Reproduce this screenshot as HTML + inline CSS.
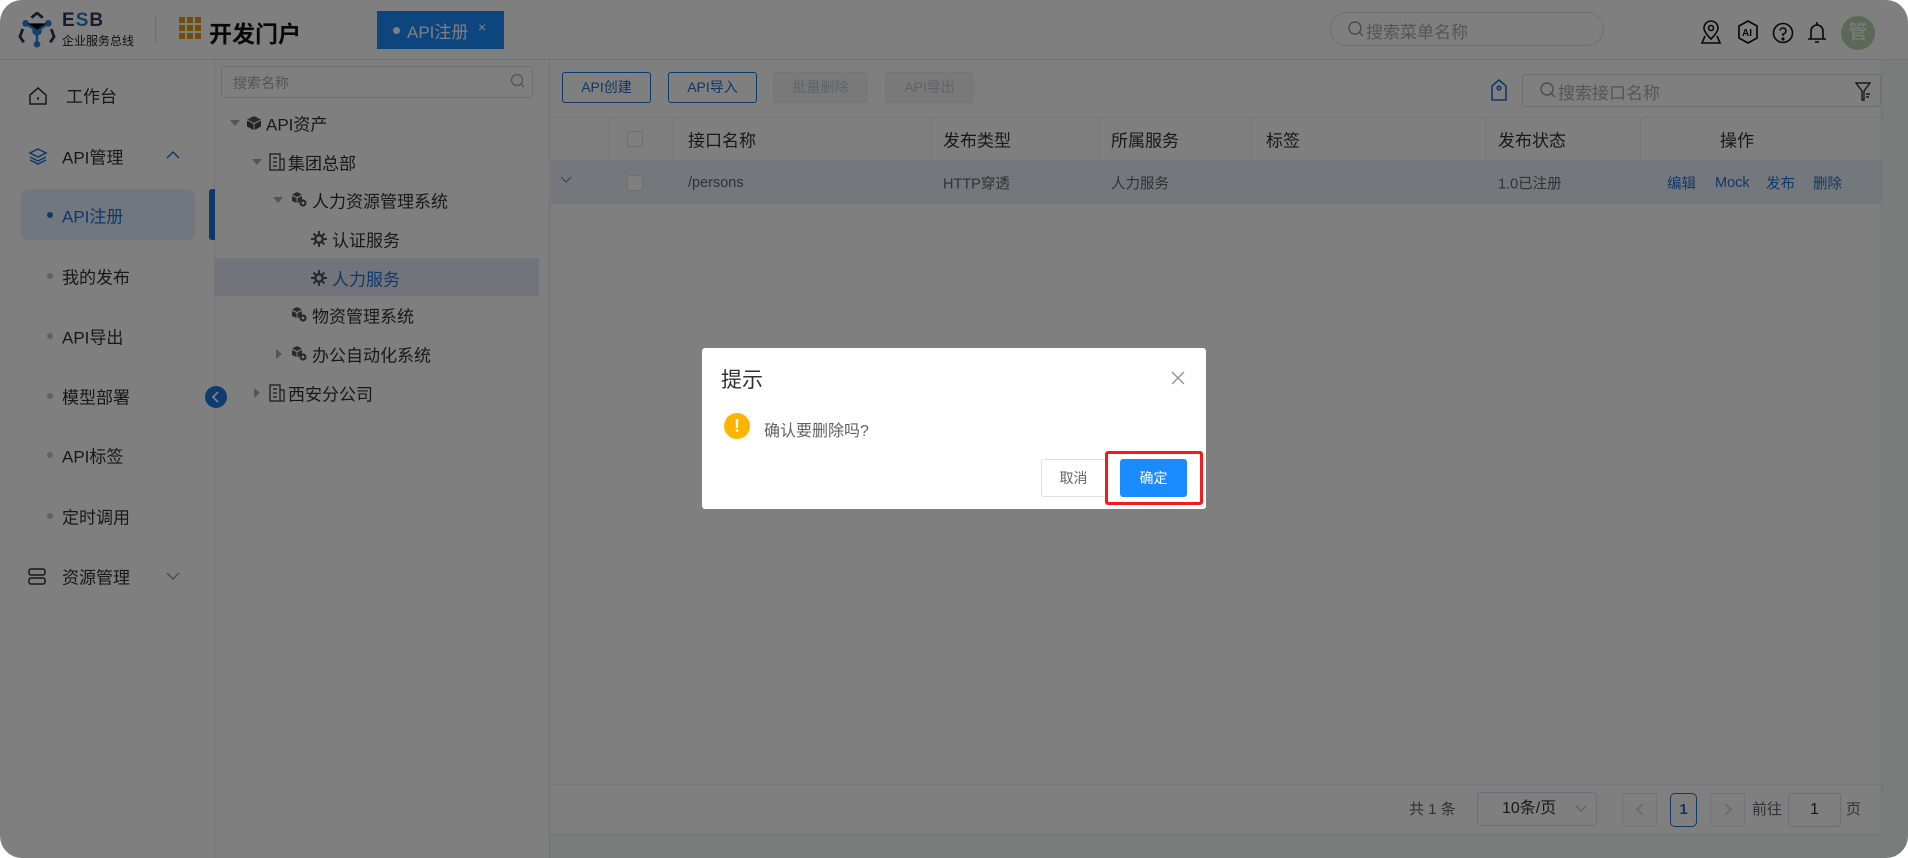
<!DOCTYPE html>
<html><head><meta charset="utf-8"><style>
*{box-sizing:border-box;margin:0;padding:0}
body{width:1908px;height:858px;background:#fff;font-family:"Liberation Sans","Noto Sans CJK SC",sans-serif;position:relative;overflow:hidden;color:#303133}
#app{position:absolute;left:0;top:0;width:1908px;height:858px;border-radius:22px;overflow:hidden;background:#f5f6f7}
.a{position:absolute;white-space:nowrap}
.hdr{left:0;top:0;width:1908px;height:60px;background:#fff;border-bottom:1px solid #e4e4e4}
.side{left:0;top:60px;width:215px;height:798px;background:#fff;border-right:1px solid #e8e8e8}
.tree{left:215px;top:60px;width:335px;height:798px;background:#fff;border-right:1px solid #e4e4e4}
.main{left:550px;top:60px;width:1332px;height:775px;background:#fff;border-bottom:1px solid #e4e4e4;border-right:1px solid #e4e4e4}
.si{font-size:17px;color:#303133;transform:translateY(-50%)}
.dot{width:6px;height:6px;border-radius:50%;background:#c0c4cc}
.tr{font-size:17px;color:#303133;transform:translateY(-50%)}
.btn{top:72px;height:31px;border:1px solid #1e6fd0;border-radius:3px;color:#1e6fd0;font-size:14px;text-align:center;line-height:29px}
.btn.d{border-color:#eee;background:#f3f3f3;color:#c0c4cc}
.th{font-size:17px;color:#303133;top:139px;transform:translateY(-50%)}
.td{font-size:14.5px;color:#606266;top:183px;transform:translateY(-50%)}
.lk{color:#1e6fd0;font-size:14.5px;top:183px;transform:translateY(-50%)}
.vl{width:1px;background:#ebeef5}
.cb{width:16px;height:16px;border:1px solid #dcdfe6;border-radius:2px;background:#fff}
.ovl{position:absolute;left:0;top:0;width:1908px;height:858px;background:rgba(0,0,0,0.5)}
</style></head><body>
<div id="app">
<div class="a hdr"></div>
<svg class="a" style="left:18px;top:12px" width="38" height="36" viewBox="0 0 40 38"><path d="M14 6 L20 1 L26 6" stroke="#2a3a5a" stroke-width="3" fill="none"/><path d="M5 18 L2 26 L6 32" stroke="#2a3a5a" stroke-width="3" fill="none"/><path d="M35 18 L38 26 L34 32" stroke="#2a3a5a" stroke-width="3" fill="none"/><circle cx="20" cy="20" r="5" fill="#2f7ed8"/><circle cx="8" cy="12" r="3.5" fill="#2f7ed8"/><circle cx="32" cy="12" r="3.5" fill="#2f7ed8"/><circle cx="20" cy="34" r="3.5" fill="#2f7ed8"/><path d="M8 12 L20 20 L32 12 M20 20 L20 34" stroke="#2f7ed8" stroke-width="2.5"/></svg>
<div class="a" style="left:62px;top:10px;font-size:19px;font-weight:bold;color:#2a3a5a;letter-spacing:1px">E<span style="color:#2f7ed8">S</span>B</div>
<div class="a" style="left:62px;top:32px;font-size:12px;color:#222">企业服务总线</div>
<div class="a" style="left:155px;top:16px;width:1px;height:28px;background:#ddd"></div>
<svg class="a" style="left:179px;top:17px" width="22" height="22"><g fill="#e0a000"><rect x="0" y="0" width="6" height="6"/><rect x="8" y="0" width="6" height="6"/><rect x="16" y="0" width="6" height="6"/><rect x="0" y="8" width="6" height="6"/><rect x="8" y="8" width="6" height="6"/><rect x="16" y="8" width="6" height="6"/><rect x="0" y="16" width="6" height="6"/><rect x="8" y="16" width="6" height="6"/><rect x="16" y="16" width="6" height="6"/></g></svg>
<div class="a" style="left:209px;top:15px;font-size:23px;font-weight:bold;color:#111">开发门户</div>
<div class="a" style="left:377px;top:11px;width:127px;height:38px;background:#1b8cff"></div>
<div class="a" style="left:393px;top:27px;width:7px;height:7px;border-radius:50%;background:#fff"></div>
<div class="a" style="left:407px;top:18px;font-size:17px;color:#fff">API注册</div>
<div class="a" style="left:478px;top:19px;font-size:14px;color:#fff">×</div>
<div class="a" style="left:1330px;top:12px;width:274px;height:34px;border:1px solid #dcdfe6;border-radius:17px"></div>
<svg class="a" style="left:1348px;top:21px" width="16" height="17"><circle cx="7" cy="7" r="6" stroke="#999" stroke-width="1.4" fill="none"/><path d="M11 11 L15 15" stroke="#999" stroke-width="1.4"/></svg>
<div class="a" style="left:1366px;top:18px;font-size:17px;color:#aaa">搜索菜单名称</div>
<svg class="a" style="left:1700px;top:20px" width="22" height="26" viewBox="0 0 22 26" fill="none" stroke="#111" stroke-width="1.6"><path d="M11 19 C5 13 4 10 4 8 A7 7 0 0 1 18 8 C18 10 17 13 11 19Z"/><circle cx="11" cy="8" r="2.5"/><path d="M5 16 L2 23 L20 23 L17 16"/></svg>
<svg class="a" style="left:1737px;top:20px" width="22" height="24" viewBox="0 0 22 24" fill="none" stroke="#111" stroke-width="1.7"><path d="M11 1 L20 6 L20 18 L11 23 L2 18 L2 6 Z"/><text x="5" y="16" font-size="10" font-family="Liberation Sans" font-weight="bold" fill="#111" stroke="none">AI</text></svg>
<svg class="a" style="left:1772px;top:22px" width="22" height="22" fill="none" stroke="#111" stroke-width="1.6"><circle cx="11" cy="11" r="9.5"/><path d="M8 8.5 A3 3 0 1 1 11 12 L11 14"/><circle cx="11" cy="17" r="0.8" fill="#111"/></svg>
<svg class="a" style="left:1807px;top:20px" width="20" height="26" fill="none" stroke="#111" stroke-width="1.6"><path d="M4 19 L4 11 A6 6 0 0 1 16 11 L16 19 Z M1 19 L19 19 M10 2 L10 5"/><path d="M8 22 L12 22"/></svg>
<div class="a" style="left:1841px;top:16px;width:34px;height:34px;border-radius:50%;background:#b9d2b2;color:#fff;font-size:19px;text-align:center;line-height:34px">管</div>

<div class="a side"></div>
<svg class="a" style="left:28px;top:86px" width="20" height="20" fill="none" stroke="#333" stroke-width="1.5"><path d="M2 9 L10 2 L18 9 L18 18 L2 18 Z"/><path d="M10 11 L10 14"/></svg>
<div class="a si" style="left:66px;top:95px">工作台</div>
<svg class="a" style="left:28px;top:147px" width="20" height="18" fill="none" stroke="#1e6fd0" stroke-width="1.5"><path d="M10 2 L18 6 L10 10 L2 6 Z M2 10 L10 14 L18 10 M2 13 L10 17 L18 13"/></svg>
<div class="a si" style="left:62px;top:156px">API管理</div>
<svg class="a" style="left:166px;top:150px" width="14" height="9" fill="none" stroke="#1e6fd0" stroke-width="1.4"><path d="M1 8 L7 2 L13 8"/></svg>
<div class="a" style="left:21px;top:189px;width:174px;height:51px;border-radius:8px;background:#e3effd"></div>
<div class="a dot" style="left:47px;top:212px;background:#1e6fd0"></div>
<div class="a si" style="left:62px;top:215px;color:#1e6fd0">API注册</div>
<div class="a" style="left:209px;top:189px;width:6px;height:51px;background:#1e6fd0;border-radius:3px 0 0 3px"></div>
<div class="a dot" style="left:47px;top:273px"></div><div class="a si" style="left:62px;top:276px">我的发布</div>
<div class="a dot" style="left:47px;top:333px"></div><div class="a si" style="left:62px;top:336px">API导出</div>
<div class="a dot" style="left:47px;top:393px"></div><div class="a si" style="left:62px;top:396px">模型部署</div>
<div class="a dot" style="left:47px;top:452px"></div><div class="a si" style="left:62px;top:455px">API标签</div>
<div class="a dot" style="left:47px;top:513px"></div><div class="a si" style="left:62px;top:516px">定时调用</div>
<svg class="a" style="left:28px;top:568px" width="18" height="17" fill="none" stroke="#333" stroke-width="1.5"><rect x="1" y="1" width="16" height="6" rx="2"/><rect x="1" y="10" width="16" height="6" rx="2"/></svg>
<div class="a si" style="left:62px;top:576px">资源管理</div>
<svg class="a" style="left:166px;top:572px" width="14" height="9" fill="none" stroke="#999" stroke-width="1.4"><path d="M1 1 L7 7 L13 1"/></svg>

<div class="a tree"></div>
<div class="a" style="left:221px;top:66px;width:312px;height:32px;border:1px solid #dcdfe6;border-radius:3px"></div>
<div class="a" style="left:233px;top:73px;font-size:14px;color:#aaa">搜索名称</div>
<svg class="a" style="left:510px;top:73px" width="16" height="16" fill="none" stroke="#aaa" stroke-width="1.3"><circle cx="7" cy="7" r="5.5"/><path d="M11 11 L14 14"/></svg>
<div class="a" style="left:215px;top:258px;width:324px;height:38px;background:#e3ebf7"></div>
<div class="a" style="left:230px;top:120px;border:5px solid transparent;border-top:6px solid #aaa"></div>
<svg class="a" style="left:246px;top:115px" width="16" height="16"><path d="M8 1 L15 4.5 L8 8 L1 4.5Z" fill="#555"/><path d="M1 5.5 L7.5 9 L7.5 15 L1 11.5Z M15 5.5 L8.5 9 L8.5 15 L15 11.5Z" fill="#444"/></svg>
<div class="a tr" style="left:266px;top:123px">API资产</div>
<div class="a" style="left:252px;top:159px;border:5px solid transparent;border-top:6px solid #aaa"></div>
<svg class="a" style="left:269px;top:153px" width="16" height="18" fill="none" stroke="#555" stroke-width="1.5"><rect x="1" y="1" width="10" height="16"/><path d="M11 6 L15 6 L15 17 L11 17 M4 5 L8 5 M4 9 L8 9 M4 13 L8 13"/></svg>
<div class="a tr" style="left:288px;top:162px">集团总部</div>
<div class="a" style="left:273px;top:197px;border:5px solid transparent;border-top:6px solid #aaa"></div>
<svg class="a" style="left:290px;top:191px" width="18" height="17"><path d="M7 1 L12 3.5 L7 6 L2 3.5Z M2 5 L6.5 7 L6.5 12 L2 10Z M12 5 L7.5 7 L7.5 12 L12 10Z" fill="#555"/><circle cx="13" cy="12" r="3.6" fill="#555"/><circle cx="13" cy="12" r="1.4" fill="#fff"/></svg>
<div class="a tr" style="left:312px;top:200px">人力资源管理系统</div>
<svg class="a" style="left:311px;top:231px" width="16" height="16"><path d="M8 0 V16 M0 8 H16 M2.5 2.5 L13.5 13.5 M13.5 2.5 L2.5 13.5" stroke="#555" stroke-width="2"/><circle cx="8" cy="8" r="5" fill="#555"/><circle cx="8" cy="8" r="2.5" fill="#fff"/></svg>
<div class="a tr" style="left:332px;top:239px">认证服务</div>
<svg class="a" style="left:311px;top:270px" width="16" height="16"><path d="M8 0 V16 M0 8 H16 M2.5 2.5 L13.5 13.5 M13.5 2.5 L2.5 13.5" stroke="#555" stroke-width="2"/><circle cx="8" cy="8" r="5" fill="#555"/><circle cx="8" cy="8" r="2.5" fill="#e3ebf7"/></svg>
<div class="a tr" style="left:332px;top:278px;color:#1e6fd0">人力服务</div>
<svg class="a" style="left:290px;top:306px" width="18" height="17"><path d="M7 1 L12 3.5 L7 6 L2 3.5Z M2 5 L6.5 7 L6.5 12 L2 10Z M12 5 L7.5 7 L7.5 12 L12 10Z" fill="#555"/><circle cx="13" cy="12" r="3.6" fill="#555"/><circle cx="13" cy="12" r="1.4" fill="#fff"/></svg>
<div class="a tr" style="left:312px;top:315px">物资管理系统</div>
<div class="a" style="left:276px;top:349px;border:5px solid transparent;border-left:6px solid #aaa"></div>
<svg class="a" style="left:290px;top:345px" width="18" height="17"><path d="M7 1 L12 3.5 L7 6 L2 3.5Z M2 5 L6.5 7 L6.5 12 L2 10Z M12 5 L7.5 7 L7.5 12 L12 10Z" fill="#555"/><circle cx="13" cy="12" r="3.6" fill="#555"/><circle cx="13" cy="12" r="1.4" fill="#fff"/></svg>
<div class="a tr" style="left:312px;top:354px">办公自动化系统</div>
<div class="a" style="left:254px;top:388px;border:5px solid transparent;border-left:6px solid #aaa"></div>
<svg class="a" style="left:269px;top:384px" width="16" height="18" fill="none" stroke="#555" stroke-width="1.5"><rect x="1" y="1" width="10" height="16"/><path d="M11 6 L15 6 L15 17 L11 17 M4 5 L8 5 M4 9 L8 9 M4 13 L8 13"/></svg>
<div class="a tr" style="left:288px;top:393px">西安分公司</div>
<div class="a" style="left:205px;top:386px;width:22px;height:22px;border-radius:50%;background:#1e78e0"></div>
<svg class="a" style="left:211px;top:391px" width="10" height="12" fill="none" stroke="#fff" stroke-width="1.8"><path d="M7 1 L2 6 L7 11"/></svg>

<div class="a main"></div>
<div class="a btn" style="left:562px;width:89px">API创建</div>
<div class="a btn" style="left:668px;width:89px">API导入</div>
<div class="a btn d" style="left:773px;width:95px">批量删除</div>
<div class="a btn d" style="left:885px;width:89px">API导出</div>
<svg class="a" style="left:1491px;top:79px" width="16" height="22" fill="none" stroke="#1e6fd0" stroke-width="1.6"><path d="M8 1 L15 7 L15 21 L1 21 L1 7 Z"/><circle cx="8" cy="9" r="1.8"/></svg>
<div class="a" style="left:1522px;top:74px;width:359px;height:33px;border:1px solid #dcdfe6;border-radius:3px"></div>
<svg class="a" style="left:1540px;top:82px" width="16" height="17" fill="none" stroke="#999" stroke-width="1.4"><circle cx="7" cy="7" r="6"/><path d="M11 11 L15 15"/></svg>
<div class="a" style="left:1558px;top:79px;font-size:17px;color:#aaa">搜索接口名称</div>
<svg class="a" style="left:1855px;top:82px" width="16" height="20" fill="none" stroke="#333" stroke-width="1.4"><path d="M1 1 L15 1 L9 9 L9 18 L7 18 L7 9 Z M11 12 H15 M11 15 H14"/></svg>
<div class="a" style="left:551px;top:117px;width:1330px;height:44px;background:#fff;border-top:1px solid #ebeef5;border-bottom:1px solid #ebeef5"></div>
<div class="a" style="left:551px;top:161px;width:1330px;height:43px;background:#e9f1fb"></div>
<div class="a vl" style="left:609px;top:117px;height:44px"></div>
<div class="a vl" style="left:673px;top:117px;height:44px"></div>
<div class="a vl" style="left:931px;top:117px;height:44px"></div>
<div class="a vl" style="left:1099px;top:117px;height:44px"></div>
<div class="a vl" style="left:1251px;top:117px;height:44px"></div>
<div class="a vl" style="left:1485px;top:117px;height:44px"></div>
<div class="a vl" style="left:1640px;top:117px;height:44px"></div>
<div class="a cb" style="left:627px;top:131px"></div>
<div class="a th" style="left:688px">接口名称</div>
<div class="a th" style="left:943px">发布类型</div>
<div class="a th" style="left:1111px">所属服务</div>
<div class="a th" style="left:1266px">标签</div>
<div class="a th" style="left:1498px">发布状态</div>
<div class="a th" style="left:1720px">操作</div>
<svg class="a" style="left:560px;top:176px" width="12" height="8" fill="none" stroke="#888" stroke-width="1.2"><path d="M1 1 L6 6 L11 1"/></svg>
<div class="a cb" style="left:627px;top:175px"></div>
<div class="a td" style="left:688px">/persons</div>
<div class="a td" style="left:943px">HTTP穿透</div>
<div class="a td" style="left:1111px">人力服务</div>
<div class="a td" style="left:1498px">1.0已注册</div>
<div class="a lk" style="left:1667px">编辑</div>
<div class="a lk" style="left:1715px">Mock</div>
<div class="a lk" style="left:1766px">发布</div>
<div class="a lk" style="left:1813px">删除</div>
<div class="a" style="left:551px;top:784px;width:1330px;height:1px;background:#ebeef5"></div>
<div class="a" style="left:1409px;top:798px;font-size:15px;color:#606266">共 1 条</div>
<div class="a" style="left:1477px;top:792px;width:120px;height:34px;border:1px solid #dcdfe6;border-radius:3px;font-size:16px;line-height:32px;padding-left:24px;color:#303133">10条/页</div>
<svg class="a" style="left:1575px;top:805px" width="12" height="8" fill="none" stroke="#bbb" stroke-width="1.2"><path d="M1 1 L6 6 L11 1"/></svg>
<div class="a" style="left:1622px;top:793px;width:35px;height:34px;border:1px solid #e4e7ed;border-radius:3px"></div>
<svg class="a" style="left:1636px;top:803px" width="8" height="13" fill="none" stroke="#ccc" stroke-width="1.4"><path d="M7 1 L1 6.5 L7 12"/></svg>
<div class="a" style="left:1670px;top:793px;width:27px;height:34px;border:1px solid #1e6fd0;border-radius:5px;color:#1e6fd0;font-weight:bold;font-size:15px;text-align:center;line-height:32px">1</div>
<div class="a" style="left:1710px;top:793px;width:35px;height:34px;border:1px solid #e4e7ed;border-radius:3px"></div>
<svg class="a" style="left:1724px;top:803px" width="8" height="13" fill="none" stroke="#ccc" stroke-width="1.4"><path d="M1 1 L7 6.5 L1 12"/></svg>
<div class="a" style="left:1752px;top:798px;font-size:15px;color:#606266">前往</div>
<div class="a" style="left:1788px;top:793px;width:53px;height:34px;border:1px solid #dcdfe6;border-radius:3px;text-align:center;line-height:32px;font-size:16px">1</div>
<div class="a" style="left:1846px;top:798px;font-size:15px;color:#606266">页</div>

<div class="ovl"></div>
<div class="a" style="left:702px;top:348px;width:504px;height:161px;background:#fff;border-radius:3px"></div>
<div class="a" style="left:721px;top:364px;font-size:21px;color:#303133">提示</div>
<svg class="a" style="left:1171px;top:371px" width="14" height="14" fill="none" stroke="#909399" stroke-width="1.4"><path d="M1 1 L13 13 M13 1 L1 13"/></svg>
<div class="a" style="left:724px;top:413px;width:26px;height:26px;border-radius:50%;background:#ffb400;color:#fff;font-weight:bold;font-size:18px;text-align:center;line-height:26px">!</div>
<div class="a" style="left:764px;top:417px;font-size:16px;color:#606266">确认要删除吗?</div>
<div class="a" style="left:1041px;top:459px;width:65px;height:38px;border:1px solid #dcdfe6;border-radius:3px;text-align:center;line-height:36px;font-size:14px;color:#606266">取消</div>
<div class="a" style="left:1120px;top:459px;width:67px;height:38px;background:#1b8cff;border-radius:3px;text-align:center;line-height:38px;font-size:14px;color:#fff">确定</div>
<div class="a" style="left:1105px;top:451px;width:98px;height:54px;border:3px solid #f21c1c;border-radius:3px"></div>
</div>
</body></html>
